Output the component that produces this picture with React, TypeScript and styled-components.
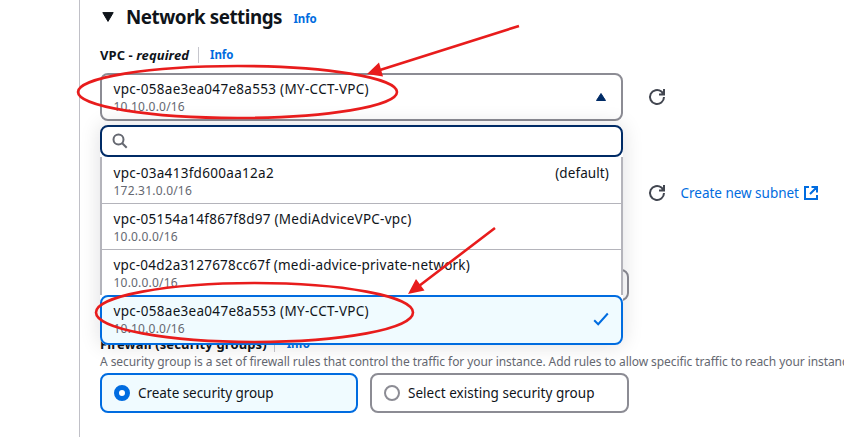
import React from "react";
import styled, { createGlobalStyle } from "styled-components";

const GlobalStyle = createGlobalStyle`
  * { box-sizing: border-box; }
  html, body { margin: 0; background: #fff; overflow: hidden; }
  body { font-family: "Noto Sans", "Open Sans", sans-serif; font-size: 13.5px; color: #0f141a; }
`;

const Page = styled.main`
  position: relative;
  width: 844px;
  height: 437px;
  overflow: hidden;
  padding-left: 79px;
  background: #fff;
`;

const Panel = styled.section`
  display: flex;
  flex-direction: column;
  height: 437px;
  padding-left: 20px;
  border-left: 1px solid #c0c0c7;
`;

const Line = styled.span<{ $spacing?: number }>`
  display: inline-block;
  white-space: nowrap;
  letter-spacing: ${(p) => p.$spacing ?? 0}px;
`;

const Header = styled.header`
  display: flex;
  align-items: center;
  height: 33px;
  padding-left: 2px;
`;

const Caret = styled.svg`
  display: block;
  width: 12px;
  height: 10px;
`;

const Title = styled.h2`
  margin: 0 0 0 12px;
  width: 157px;
  font-size: 18.8px;
  line-height: 26px;
  font-weight: 700;
  white-space: nowrap;
  letter-spacing: -0.46px;
`;

const Info = styled.a<{ $left: number; $top?: number }>`
  margin-left: ${(p) => p.$left}px;
  margin-top: ${(p) => p.$top ?? 0}px;
  color: #006ce0;
  font-size: 11.5px;
  line-height: 16px;
  font-weight: 700;
  letter-spacing: -0.1px;
`;

const Label = styled.div<{ $h: number }>`
  display: flex;
  align-items: center;
  height: ${(p) => p.$h}px;
  font-size: 13px;
  font-weight: 700;
  white-space: nowrap;
`;

const VpcLabel = styled(Label)`
  padding-top: 4px;
`;

const Separator = styled.span<{ $left: number }>`
  width: 1px;
  height: 16px;
  margin-left: ${(p) => p.$left}px;
  background: #c6c6cd;
`;

const Field = styled.div`
  position: relative;
  display: flex;
  align-items: center;
  height: 48px;
`;

const Trigger = styled.div`
  display: flex;
  align-items: center;
  justify-content: space-between;
  width: 523px;
  height: 48px;
  padding: 0 15px 0 11.5px;
  border: 2px solid #8c8c94;
  border-radius: 8px;
`;

const OptionText = styled.div`
  display: flex;
  flex-direction: column;
`;

const Name = styled.span<{ $spacing?: number }>`
  line-height: 18px;
  white-space: nowrap;
  letter-spacing: ${(p) => p.$spacing ?? 0}px;
`;

const Cidr = styled.span`
  height: 16px;
  font-size: 12px;
  line-height: 18px;
  letter-spacing: 0.2px;
  color: #656871;
  white-space: nowrap;
`;

const Refresh = styled.svg`
  width: 18px;
  height: 18px;
  margin-left: 25px;
`;

const Dropdown = styled.div`
  position: absolute;
  z-index: 2;
  top: 52px;
  left: 0;
  width: 523px;
  height: 220px;
  border-radius: 8px;
  background: #fff;
  box-shadow: 0 0 20px 1px rgba(0, 7, 22, 0.12);
`;

const Search = styled.div`
  display: flex;
  align-items: center;
  height: 32px;
  padding-left: 10px;
  border: 2px solid #002b66;
  border-radius: 8px;
  background: #fff;
`;

const Options = styled.div`
  height: 138px;
  border: solid #b4b4bb;
  border-width: 0 2px;
`;

const Option = styled.div<{ $selected?: boolean }>`
  display: flex;
  justify-content: space-between;
  height: ${(p) => (p.$selected ? 50 : 46)}px;
  padding: ${(p) => (p.$selected ? "5px 12px 0 11.5px" : "7px 12px 0 11.5px")};
  border: ${(p) => (p.$selected ? "2px solid #006ce0" : "0 solid #b4b4bb")};
  border-radius: ${(p) => (p.$selected ? 8 : 0)}px;
  background: ${(p) => (p.$selected ? "#f0fbff" : "#fff")};

  & + & { border-top-width: 1px; padding-top: 6px; }
`;

const Check = styled.svg`
  width: 16px;
  height: 16px;
  margin-top: 9px;
`;

const SubnetRow = styled.div`
  display: flex;
  align-items: center;
  height: 48px;
  margin-top: 48px;
  padding-left: 523px;
`;

const CreateLink = styled.a`
  display: flex;
  align-items: center;
  margin-left: 14.5px;
  color: #006ce0;
  white-space: nowrap;
`;

const External = styled.svg`
  width: 16px;
  height: 16px;
  margin-left: 4px;
`;

const PlainSelect = styled.div`
  width: 529px;
  height: 32px;
  margin-top: 52px;
  border: 2px solid #8c8c94;
  border-radius: 8px;
`;

const FirewallLabel = styled(Label)`
  margin-top: 32px;
  padding-top: 2px;
`;

const Description = styled.p`
  margin: 0;
  height: 20px;
  font-size: 12px;
  line-height: 17px;
  color: #656871;
  white-space: nowrap;
`;

const Tiles = styled.div`
  display: flex;
  gap: 12px;
`;

const Tile = styled.div<{ $checked?: boolean }>`
  display: flex;
  align-items: center;
  gap: 8px;
  width: ${(p) => (p.$checked ? 258 : 259)}px;
  height: 40px;
  padding-left: 12px;
  border: 2px solid ${(p) => (p.$checked ? "#006ce0" : "#8c8c94")};
  border-radius: 8px;
  background: ${(p) => (p.$checked ? "#f0fbff" : "#fff")};
`;

const Radio = styled.span<{ $checked?: boolean }>`
  width: 16px;
  height: 16px;
  border: ${(p) => (p.$checked ? "5px solid #006ce0" : "2px solid #8c8c94")};
  border-radius: 50%;
  background: #fff;
`;

const Annotations = styled.svg`
  position: absolute;
  z-index: 5;
  left: 0;
  top: 0;
  pointer-events: none;
`;

const RefreshIcon = () => (
  <Refresh viewBox="0 0 18 18" fill="none" stroke="#424650" strokeWidth="2">
    <path d="M16 9a7 7 0 1 1-2.6-5.450L16 6" />
    <path d="M16 1v5.500h-5" />
    <path d="M16 3v3.500h-3.500z" fill="#424650" stroke="none" />
  </Refresh>
);

const vpcs = [
  { name: "vpc-03a413fd600aa12a2", cidr: "172.31.0.0/16", tag: "(default)", spacing: 0.3 },
  { name: "vpc-05154a14f867f8d97 (MediAdviceVPC-vpc)", cidr: "10.0.0.0/16", spacing: 0.27 },
  { name: "vpc-04d2a3127678cc67f (medi-advice-private-network)", cidr: "10.0.0.0/16", spacing: 0.21 },
];

const chosen = { name: "vpc-058ae3ea047e8a553 (MY-CCT-VPC)", cidr: "10.10.0.0/16", spacing: 0.3 };

export default function App() {
  return (
    <>
      <GlobalStyle />
      <Page>
        <Panel>
          <Header>
            <Caret viewBox="0 0 12 10"><path d="M.8.6h10.4L6 9.4z" fill="#0f141a" stroke="#0f141a" strokeLinejoin="round" /></Caret>
            <Title>Network settings</Title>
            <Info $left={10.5} $top={4}>Info</Info>
          </Header>
          <VpcLabel $h={40}>
            <Line $spacing={0.08}>VPC - <i>required</i></Line>
            <Separator $left={9} />
            <Info $left={11}>Info</Info>
          </VpcLabel>
          <Field>
            <Trigger>
              <OptionText>
                <Name $spacing={chosen.spacing}>{chosen.name}</Name>
                <Cidr>{chosen.cidr}</Cidr>
              </OptionText>
              <svg width="10" height="8" viewBox="0 0 10 8"><path d="M5 .5 9.5 7.5h-9z" fill="#002b66" stroke="#002b66" strokeLinejoin="round" /></svg>
            </Trigger>
            <RefreshIcon />
            <Dropdown>
              <Search>
                <svg width="16" height="16" viewBox="0 0 16 16" fill="none" stroke="#656871" strokeWidth="2">
                  <circle cx="6.5" cy="6.5" r="5" /><path d="m10 10 4.7 4.7" />
                </svg>
              </Search>
              <Options>
                {vpcs.map((v) => (
                  <Option key={v.name}>
                    <OptionText>
                      <Name $spacing={v.spacing}>{v.name}</Name>
                      <Cidr>{v.cidr}</Cidr>
                    </OptionText>
                    {v.tag && <Name $spacing={0.1}>{v.tag}</Name>}
                  </Option>
                ))}
              </Options>
              <Option $selected>
                <OptionText>
                  <Name $spacing={chosen.spacing}>{chosen.name}</Name>
                  <Cidr>{chosen.cidr}</Cidr>
                </OptionText>
                <Check viewBox="0 0 16 16" fill="none" stroke="#006ce0" strokeWidth="2"><path d="m1.2 9.2 4 4L14.8 2.500" /></Check>
              </Option>
            </Dropdown>
          </Field>
          <SubnetRow>
            <RefreshIcon />
            <CreateLink>
              <Line $spacing={-0.02}>Create new subnet</Line>
              <External viewBox="0 0 16 16" fill="none" stroke="#006ce0" strokeWidth="2">
                <path d="M6 2H2v12h12v-4M8.500 2H14v5.500M14 2 7 9" />
                <path d="M10.500 2H14v3.500z" fill="#006ce0" stroke="none" />
              </External>
            </CreateLink>
          </SubnetRow>
          <PlainSelect />
          <FirewallLabel $h={20}>
            <Line $spacing={0.12}>Firewall (security groups)</Line>
            <Separator $left={7} />
            <Info $left={12}>Info</Info>
          </FirewallLabel>
          <Description>
            <Line $spacing={-0.075}>A security group is a set of firewall rules that control the traffic for your instance. Add rules to allow specific traffic to reach your instance.</Line>
          </Description>
          <Tiles>
            <Tile $checked><Radio $checked /><Line $spacing={-0.05}>Create security group</Line></Tile>
            <Tile><Radio /><Line $spacing={0.03}>Select existing security group</Line></Tile>
          </Tiles>
        </Panel>
        <Annotations width="844" height="437" viewBox="0 0 844 437" fill="none" stroke="#e81c1c" strokeWidth="2.6">
          <ellipse cx="237.5" cy="92" rx="159.5" ry="26" />
          <ellipse cx="254.5" cy="312.5" rx="158.5" ry="29.5" />
          <path d="M519 26 380 70M495 228 419 286" />
          <path d="m367 74 12-11.500 4 14zM408 294l8-15 8.500 11.500z" fill="#e81c1c" stroke="none" />
        </Annotations>
      </Page>
    </>
  );
}
